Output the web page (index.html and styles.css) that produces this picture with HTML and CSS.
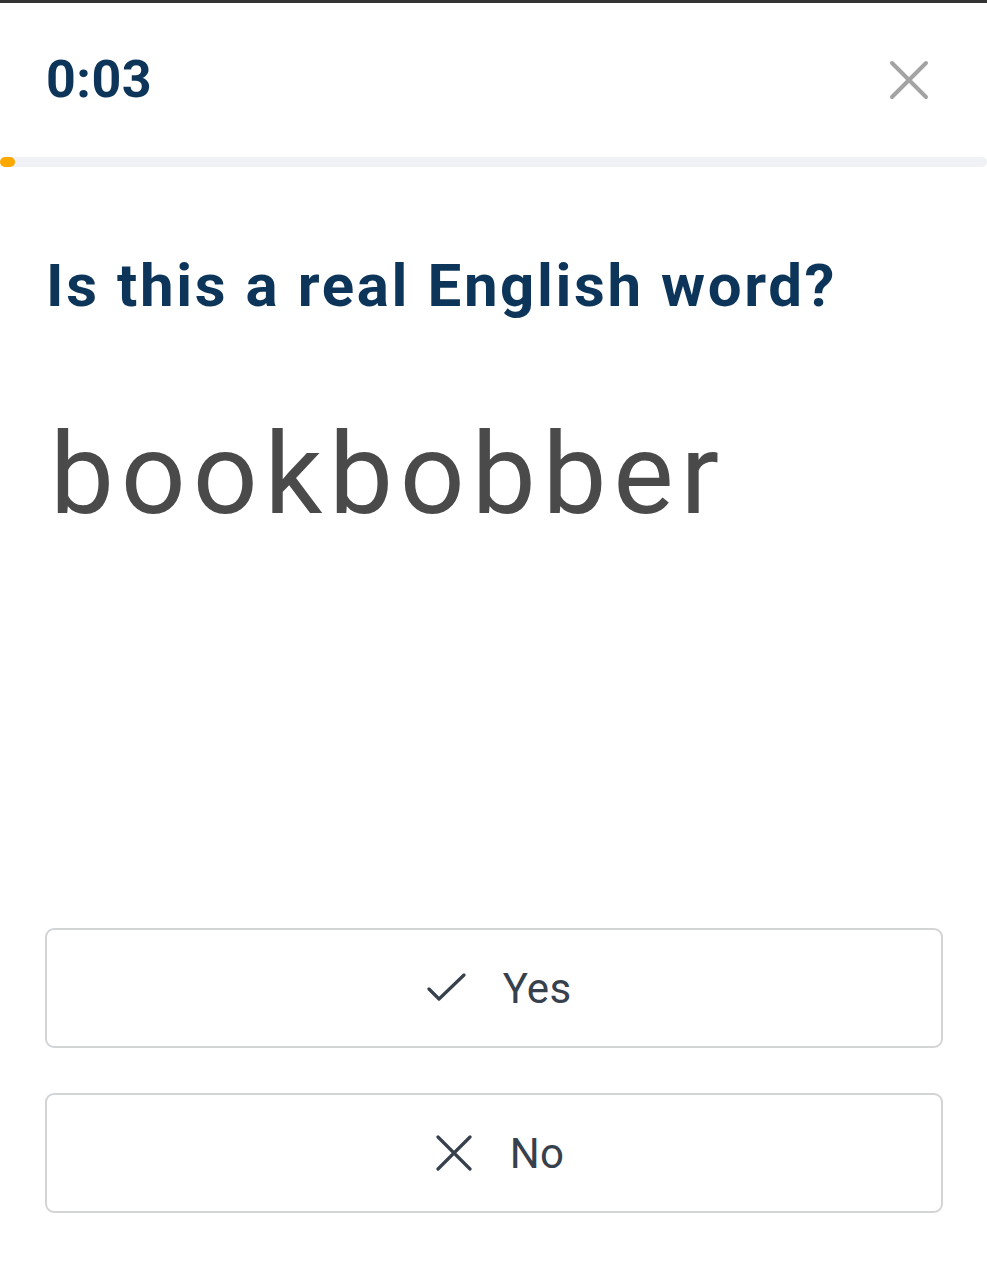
FILE: index.html
```html
<!DOCTYPE html>
<html>
<head>
<meta charset="utf-8">
<link rel="stylesheet" href="styles.css">
</head>
<body>
<div class="topline"></div>
<header class="header">
  <div class="timer">0:03</div>
  <svg class="close" width="40" height="40" viewBox="0 0 40 40"><path d="M3 3 L37 37 M37 3 L3 37" stroke="#a3a3a3" stroke-width="4" stroke-linecap="round" fill="none"/></svg>
</header>
<div class="progress"><div class="progress-fill" style="width:15px"></div></div>
<main class="content">
  <h1 class="question">Is this a real English word?</h1>
  <div class="word">bookbobber</div>
</main>
<div class="answers">
  <button class="answer">
    <svg width="40" height="30" viewBox="0 0 40 30"><path d="M2 16 L12 26 L37 2" stroke="#37414d" stroke-width="3.2" stroke-linecap="round" stroke-linejoin="round" fill="none"/></svg>
    <span>Yes</span>
  </button>
  <button class="answer no">
    <svg width="36" height="36" viewBox="0 0 36 36"><path d="M2 2 L34 34 M34 2 L2 34" stroke="#37414d" stroke-width="3.2" stroke-linecap="round" fill="none"/></svg>
    <span>No</span>
  </button>
</div>
</body>
</html>
```
FILE: styles.css
```css
html, body {
  margin: 0;
  padding: 0;
  background: #fff;
  font-family: "Roboto", "Liberation Sans", sans-serif;
}
.topline {
  height: 3px;
  background: #333;
}
.header {
  display: flex;
  justify-content: space-between;
  align-items: center;
  height: 154px;
  padding: 0 58px 0 46px;
  box-sizing: border-box;
}
.timer {
  font-size: 52px;
  font-weight: 700;
  color: #0d3559;
  margin-top: -2px;
  letter-spacing: 0.5px;
}
.close {
  margin-top: 0;
}
.progress {
  height: 10px;
  background: #eff1f4;
  border-radius: 5px;
}
.progress-fill {
  height: 100%;
  background: #ffa800;
  border-radius: 5px;
}
.content {
  padding: 83px 46px 0;
  height: 761px;
  box-sizing: border-box;
}
.question {
  margin: 0;
  font-size: 60px;
  font-weight: 700;
  color: #0d3559;
  line-height: 72px;
  letter-spacing: 2.6px;
}
.word {
  margin: 82px 0 0 4px;
  font-size: 114px;
  color: #4a4a4a;
  letter-spacing: 6.8px;
  line-height: 140px;
}
.answers {
  display: flex;
  flex-direction: column;
  gap: 45px;
  padding: 0 44px 0 45px;
}
.answer {
  display: flex;
  align-items: center;
  justify-content: center;
  gap: 36px;
  height: 120px;
  border: 2px solid #d2d4d6;
  border-radius: 9px;
  background: #fff;
  font-family: inherit;
  font-size: 42px;
  color: #37414d;
  padding: 0 0 0 10px;
  letter-spacing: 0.3px;
}
.answer.no {
  padding-left: 12px;
  gap: 38px;
}
```
